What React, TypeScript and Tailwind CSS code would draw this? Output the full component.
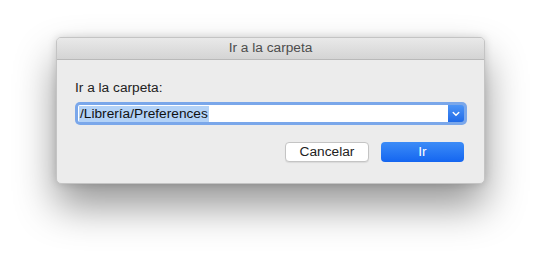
import React from "react";

export default function App() {
  return (
    <div
      className="w-[541px] h-[258px] bg-white pl-[56px] pt-[37px]"
      style={{ fontFamily: '"Liberation Sans", Arial, sans-serif' }}
    >
      <div className="w-[429px] h-[147px] rounded-[5px] bg-[#ececec] border border-[#c4c4c4] shadow-[0_22px_40px_rgba(0,0,0,0.42),0_0_8px_rgba(0,0,0,0.15)] overflow-hidden flex flex-col">
        <div className="h-[22px] shrink-0 bg-gradient-to-b from-[#e9e9e9] to-[#d4d4d4] border-b border-[#b9b9b9] flex items-center justify-center text-[13.7px] text-[#4d4d4d]">
          Ir a la carpeta
        </div>
        <div className="flex flex-col pl-[18px] pr-[17px] pt-[19px]">
          <div className="text-[13.7px] text-[#222] leading-[17px]">Ir a la carpeta:</div>
          <div className="mt-[6px] h-[23px] rounded-[5px] p-[3px] bg-[#7aa7ea] flex">
            <div className="flex-1 flex items-center bg-white rounded-l-[2px] pl-[1px]">
              <span className="bg-[#b3d2f7] text-[13.7px] text-[#111] leading-[16px] px-[1px]">
                /Librería/Preferences
              </span>
            </div>
            <div className="w-[16px] bg-gradient-to-b from-[#4c94f6] to-[#1f6ae8] rounded-r-[3px] flex items-center justify-center">
              <svg width="8" height="6" viewBox="0 0 8 6">
                <path d="M1.2 1.5 L4 4.3 L6.8 1.5" fill="none" stroke="white" strokeWidth="1.4" strokeLinecap="round" />
              </svg>
            </div>
          </div>
          <div className="flex justify-end gap-[12px] mt-[17px] pr-[3px]">
            <button className="w-[84px] h-[20px] rounded-[4px] bg-white border border-[#c4c4c4] shadow-[0_1px_1px_rgba(0,0,0,0.08)] text-[13.7px] text-[#222] leading-none">
              Cancelar
            </button>
            <button className="w-[83px] h-[20px] rounded-[4px] bg-gradient-to-b from-[#3c8cf7] to-[#1465f0] text-[13.7px] text-white leading-none">
              Ir
            </button>
          </div>
        </div>
      </div>
    </div>
  );
}
